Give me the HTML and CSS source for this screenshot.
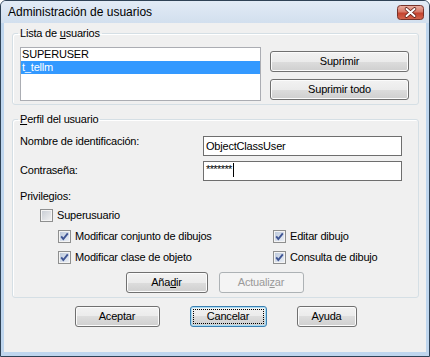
FILE: index.html
```html
<!DOCTYPE html>
<html lang="es">
<head>
    <meta charset="UTF-8">
    <title>Administración de usuarios</title>
    <link rel="stylesheet" href="styles.css">
</head>
<body>
<div class="window">
    <div class="titlebar">
        <span class="title">Administración de usuarios</span>
        <span class="close">
            <svg width="27" height="15" viewBox="0 0 27 15">
                <defs>
                    <linearGradient id="closeFill" x1="0" y1="0" x2="0" y2="1">
                        <stop offset="0" stop-color="#eab0a4"/>
                        <stop offset="0.45" stop-color="#d77a69"/>
                        <stop offset="0.55" stop-color="#c4432f"/>
                        <stop offset="1" stop-color="#d4674f"/>
                    </linearGradient>
                </defs>
                <rect x="0.5" y="0.5" width="26" height="14" rx="3" fill="url(#closeFill)" stroke="#76322a"/>
                <path d="M9.5 4 L17.5 11 M17.5 4 L9.5 11" stroke="#5e1f17" stroke-width="3.6" stroke-linecap="round"/>
                <path d="M9.5 4 L17.5 11 M17.5 4 L9.5 11" stroke="#ffffff" stroke-width="2" stroke-linecap="round"/>
            </svg>
        </span>
    </div>

    <div class="client">
        <fieldset class="group group-users">
            <legend>Lista de <u>u</u>suarios</legend>
            <div class="users">
                <ul class="listbox">
                    <li>SUPERUSER</li>
                    <li class="selected">t_tellm</li>
                </ul>
                <div class="list-actions">
                    <button class="btn btn-wide">Suprimir</button>
                    <button class="btn btn-wide">Suprimir todo</button>
                </div>
            </div>
        </fieldset>

        <fieldset class="group group-profile">
            <legend><u>P</u>erfil del usuario</legend>

            <div class="field">
                <label class="field-label label-name">Nombre de identificación:</label>
                <div class="textbox">ObjectClassUser</div>
            </div>
            <div class="field field-password">
                <label class="field-label label-password">Contraseña:</label>
                <div class="textbox password"><span class="stars">*******</span><span class="caret"></span></div>
            </div>

            <div class="privileges-title">Privilegios:</div>
            <div class="check-item superuser">
                <span class="checkbox"></span>
                <span>Superusuario</span>
            </div>

            <div class="privileges">
                <div class="check-item">
                    <span class="checkbox checked"><svg width="11" height="11" viewBox="0 0 11 11"><path d="M2.2 5.4 L4.3 8 L8.8 2.3" fill="none" stroke="#3f5594" stroke-width="1.9"/></svg></span>
                    <span>Modificar conjunto de dibujos</span>
                </div>
                <div class="check-item">
                    <span class="checkbox checked"><svg width="11" height="11" viewBox="0 0 11 11"><path d="M2.2 5.4 L4.3 8 L8.8 2.3" fill="none" stroke="#3f5594" stroke-width="1.9"/></svg></span>
                    <span>Editar dibujo</span>
                </div>
                <div class="check-item">
                    <span class="checkbox checked"><svg width="11" height="11" viewBox="0 0 11 11"><path d="M2.2 5.4 L4.3 8 L8.8 2.3" fill="none" stroke="#3f5594" stroke-width="1.9"/></svg></span>
                    <span>Modificar clase de objeto</span>
                </div>
                <div class="check-item">
                    <span class="checkbox checked"><svg width="11" height="11" viewBox="0 0 11 11"><path d="M2.2 5.4 L4.3 8 L8.8 2.3" fill="none" stroke="#3f5594" stroke-width="1.9"/></svg></span>
                    <span>Consulta de dibujo</span>
                </div>
            </div>

            <div class="profile-actions">
                <button class="btn btn-add">Aña<u>d</u>ir</button>
                <button class="btn btn-update" disabled>Actuali<u>z</u>ar</button>
            </div>
        </fieldset>

        <div class="dialog-buttons">
            <button class="btn btn-ok">Aceptar</button>
            <button class="btn btn-cancel">Cancelar</button>
            <button class="btn btn-help">Ayuda</button>
        </div>
    </div>
</div>
</body>
</html>
```

FILE: styles.css
```css
body {
    margin: 0;
    font-family: "Liberation Sans", Arial, sans-serif;
    font-size: 11px;
    letter-spacing: -0.2px;
    color: #000;
    background: #fff;
}
.window {
    width: 430px;
    height: 357px;
    box-sizing: border-box;
    border: 1px solid #2f4256;
    border-radius: 6px 6px 0 0;
    background: #bfd6ee;
    padding: 0 3px 4px;
    display: flex;
    flex-direction: column;
}
.titlebar {
    height: 22px;
    display: flex;
    justify-content: space-between;
    background: linear-gradient(#e2ebf6, #d2dfee);
    margin: 0 -3px;
    padding: 0 5px 0 7px;
    border-radius: 5px 5px 0 0;
}
.title {
    font-size: 12px;
    letter-spacing: 0;
    line-height: 22px;
}
.close {
    margin-top: 4px;
    height: 15px;
}
.close svg {
    display: block;
}
.client {
    flex: 1;
    background: #f0f0f0;
    padding: 4px 7px 0 8px;
}
.group {
    margin: 0;
    border: 1px solid #d5dfe5;
    border-radius: 3px;
    box-shadow: inset 1px 1px #fff;
    min-width: 0;
}
.group legend {
    padding: 0 2px;
    margin-left: -2px;
    line-height: 13px;
}
.group-users {
    padding: 7px 9px 3px 7px;
}
.group-profile {
    margin-top: 8px;
    padding: 0 9px 4px 7px;
}
.users {
    display: flex;
    justify-content: space-between;
}
.listbox {
    margin: 0;
    padding: 0;
    list-style: none;
    width: 241px;
    height: 54px;
    box-sizing: border-box;
    border: 1px solid #abadb3;
    background: #fff;
}
.listbox li {
    line-height: 13px;
    padding-left: 1px;
}
.listbox li.selected {
    background: #3399ff;
    color: #fff;
}
.list-actions {
    display: flex;
    flex-direction: column;
    gap: 7px;
    padding-top: 4px;
}
.btn {
    height: 21px;
    box-sizing: border-box;
    padding: 0;
    font-family: inherit;
    font-size: 11px;
    letter-spacing: -0.2px;
    color: #000;
    border: 1px solid #707070;
    border-radius: 3px;
    background: linear-gradient(#f2f2f2 0%, #ebebeb 50%, #dddddd 50%, #cfcfcf 100%);
    box-shadow: inset 0 0 0 1px #fbfbfb;
    line-height: 19px;
}
.btn-wide {
    width: 139px;
}
.btn[disabled] {
    color: #9a9a9a;
    border-color: #adb2b5;
    background: #f4f4f4;
    box-shadow: none;
}
.field {
    display: flex;
    margin-top: 10px;
}
.field-password {
    margin-top: 5px;
}
.field-label {
    width: 183px;
    line-height: 13px;
}
.label-name {
    margin-top: -1px;
}
.label-password {
    margin-top: 3px;
}
.textbox {
    width: 199px;
    height: 20px;
    box-sizing: border-box;
    border: 1px solid #6e6e6e;
    background: #fff;
    padding: 0 2px;
    line-height: 18px;
}
.password {
    display: flex;
    align-items: flex-start;
    line-height: 13px;
    padding-top: 1px;
}
.stars {
    letter-spacing: -0.6px;
}
.caret {
    width: 1px;
    height: 14px;
    margin-left: 1px;
    background: #000;
}
.privileges-title {
    margin-top: 9px;
    line-height: 13px;
}
.check-item {
    display: flex;
    align-items: center;
    gap: 4px;
    height: 13px;
    line-height: 13px;
}
.superuser {
    margin: 6px 0 0 20px;
}
.checkbox {
    flex: none;
    width: 13px;
    height: 13px;
    box-sizing: border-box;
    border: 1px solid #8e8f8f;
    box-shadow: inset 0 0 0 1px #f4f4f4;
    background: linear-gradient(135deg, #c6cbd3, #f3f3f3);
}
.checkbox.checked {
    background: linear-gradient(135deg, #b9c6da, #eef2f8);
}
.checkbox svg {
    display: block;
}
.privileges {
    display: grid;
    grid-template-columns: 215px auto;
    row-gap: 8px;
    margin: 8px 0 0 38px;
}
.profile-actions {
    display: flex;
    justify-content: center;
    gap: 11px;
    margin-top: 8px;
}
.btn-add {
    width: 82px;
}
.btn-update {
    width: 85px;
}
.dialog-buttons {
    display: flex;
    justify-content: center;
    gap: 30px;
    margin-top: 8px;
}
.btn-ok {
    width: 85px;
}
.btn-cancel {
    width: 77px;
    border-color: #3c7fb1;
    box-shadow: inset 0 0 0 1px #a7dcf5;
    outline: 1px dotted #000;
    outline-offset: -4px;
}
.btn-help {
    width: 60px;
}
```
